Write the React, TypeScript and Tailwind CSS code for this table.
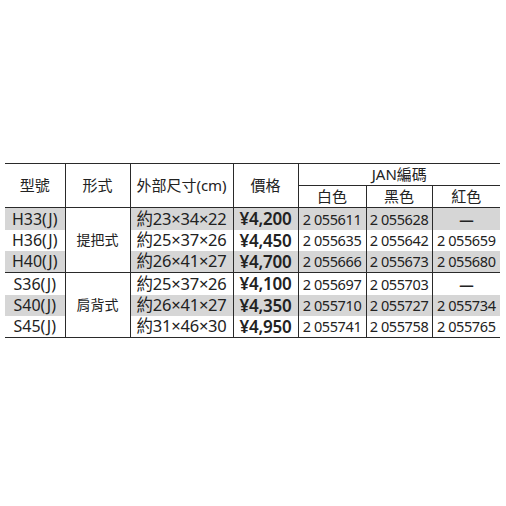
const rows = [
  { model: "H33(J)", size: "約23×34×22", price: "¥4,200", w: "2 055611", b: "2 055628", r: "—", gray: true },
  { model: "H36(J)", size: "約25×37×26", price: "¥4,450", w: "2 055635", b: "2 055642", r: "2 055659", gray: false },
  { model: "H40(J)", size: "約26×41×27", price: "¥4,700", w: "2 055666", b: "2 055673", r: "2 055680", gray: true },
  { model: "S36(J)", size: "約25×37×26", price: "¥4,100", w: "2 055697", b: "2 055703", r: "—", gray: false },
  { model: "S40(J)", size: "約26×41×27", price: "¥4,350", w: "2 055710", b: "2 055727", r: "2 055734", gray: true },
  { model: "S45(J)", size: "約31×46×30", price: "¥4,950", w: "2 055741", b: "2 055758", r: "2 055765", gray: false },
];

const line = "border-[#2a2a2a]";
const head = `p-0 text-[15px] font-normal leading-none`;

export default function App() {
  return (
    <div
      className="min-h-[506px] w-[506px] bg-white pt-[163px] pl-[5px] text-[#222]"
      style={{ fontFamily: '"Noto Sans", "Noto Sans CJK TC", sans-serif' }}
    >
      <table className={`w-[495px] table-fixed border-collapse border-t border-b ${line}`}>
        <colgroup>
          <col className="w-[60px]" />
          <col className="w-[65px]" />
          <col className="w-[103px]" />
          <col className="w-[65px]" />
          <col className="w-[68px]" />
          <col className="w-[66px]" />
          <col className="w-[68px]" />
        </colgroup>
        <thead>
          <tr className="h-[22px]">
            <th rowSpan={2} className={`border-r ${line} ${head}`}>型號</th>
            <th rowSpan={2} className={`border-r ${line} ${head}`}>形式</th>
            <th rowSpan={2} className={`border-r ${line} ${head}`}>外部尺寸(cm)</th>
            <th rowSpan={2} className={`border-r ${line} ${head}`}>價格</th>
            <th colSpan={3} className={`border-b ${line} ${head}`}>JAN編碼</th>
          </tr>
          <tr className="h-[22px]">
            <th className={`border-r ${line} ${head}`}>白色</th>
            <th className={`border-r ${line} ${head}`}>黑色</th>
            <th className={head}>紅色</th>
          </tr>
        </thead>
        <tbody className={`border-t ${line}`}>
          {rows.map((row, i) => {
            const bg = row.gray ? "bg-[#d6d6d6]" : "bg-white";
            const groupEnd = i === 2;
            return (
              <tr key={row.model} className={`${i % 3 === 1 ? "h-[21px]" : "h-[22px]"} ${groupEnd ? `border-b ${line}` : ""}`}>
                <td className={`${bg} border-r ${line} p-0 text-center text-[16px] leading-none`}>{row.model}</td>
                {i % 3 === 0 && (
                  <td rowSpan={3} className={`bg-white border-r ${line} p-0 text-center text-[14px] leading-none`}>
                    {i === 0 ? "提把式" : "肩背式"}
                  </td>
                )}
                <td className={`${bg} border-r ${line} p-0 text-center text-[16.5px] tracking-[-0.2px] leading-none`}>{row.size}</td>
                <td className={`${bg} border-r ${line} p-0 text-center text-[17px] font-semibold tracking-[-0.2px] leading-none`}>{row.price}</td>
                <td className={`${bg} border-r ${line} p-0 text-center text-[14.5px] tracking-[-0.4px] leading-none`}>{row.w}</td>
                <td className={`${bg} border-r ${line} p-0 text-center text-[14.5px] tracking-[-0.4px] leading-none`}>{row.b}</td>
                <td className={`${bg} p-0 text-center text-[14.5px] tracking-[-0.4px] leading-none ${row.r === "—" ? "font-bold" : ""}`}>{row.r}</td>
              </tr>
            );
          })}
        </tbody>
      </table>
    </div>
  );
}
